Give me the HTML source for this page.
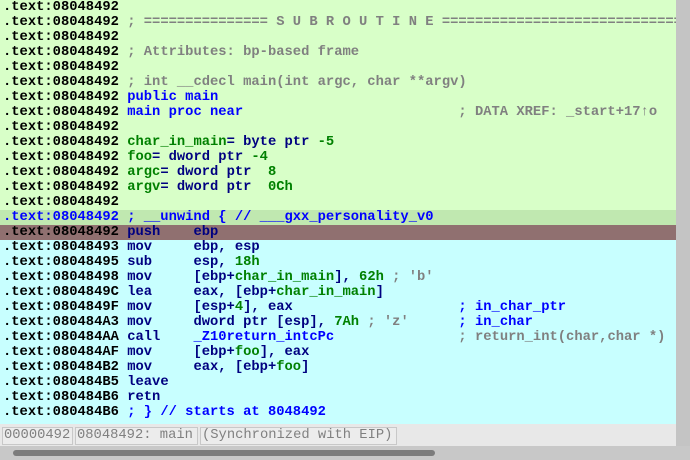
<!DOCTYPE html>
<html><head><style>
body{margin:0;width:690px;height:460px;overflow:hidden;background:#fff;position:relative;font-family:"Liberation Mono",monospace;}
#code{position:absolute;left:0;top:0;width:676px;height:424px;background:#c8ffff;overflow:hidden}
.l{height:15px;line-height:15px;white-space:pre;font-size:13.8px;font-weight:bold;color:#000;padding-left:3px}
.g{background:#d8ffc8}.h{background:#c0e8b0}.b{background:#907070}
.c{color:#808080}.k{color:#0000ff}.n{color:#000080}.v{color:#008000}
#vs{position:absolute;left:676px;top:0;width:14px;height:446px;background:#c4c4c4}
#vt{position:absolute;left:680px;top:17px;width:6px;height:27px;background:#7a7a7a;border-radius:3px}
#st{position:absolute;left:0;top:424px;width:676px;height:22px;background:#e8e8e8}
.bx{position:absolute;top:3px;height:16px;border:1px solid #c8c8c8;background:#ececec;color:#808080;font-size:13.8px;line-height:16px;white-space:pre;padding-left:1px}
#hs{position:absolute;left:0;top:446px;width:690px;height:14px;background:#c8c8c8}
#ht{position:absolute;left:13px;top:4px;width:422px;height:6px;background:#7c7c7c;border-radius:3px}
</style></head><body>
<div id="code">
<div class="l g">.text:08048492</div>
<div class="l g">.text:08048492 <span class="c">; =============== S U B R O U T I N E =======================================</span></div>
<div class="l g">.text:08048492</div>
<div class="l g">.text:08048492 <span class="c">; Attributes: bp-based frame</span></div>
<div class="l g">.text:08048492</div>
<div class="l g">.text:08048492 <span class="c">; int __cdecl main(int argc, char **argv)</span></div>
<div class="l g">.text:08048492 <span class="k">public main</span></div>
<div class="l g">.text:08048492 <span class="k">main proc near</span>                          <span class="c">; DATA XREF: _start+17↑o</span></div>
<div class="l g">.text:08048492</div>
<div class="l g">.text:08048492 <span class="v">char_in_main</span><span class="n">= byte ptr </span><span class="v">-5</span></div>
<div class="l g">.text:08048492 <span class="v">foo</span><span class="n">= dword ptr </span><span class="v">-4</span></div>
<div class="l g">.text:08048492 <span class="v">argc</span><span class="n">= dword ptr  </span><span class="v">8</span></div>
<div class="l g">.text:08048492 <span class="v">argv</span><span class="n">= dword ptr  </span><span class="v">0Ch</span></div>
<div class="l g">.text:08048492</div>
<div class="l h k">.text:08048492 ; __unwind { // ___gxx_personality_v0</div>
<div class="l b">.text:08048492 <span class="n">push    ebp</span></div>
<div class="l">.text:08048493 <span class="n">mov     ebp, esp</span></div>
<div class="l">.text:08048495 <span class="n">sub     esp, </span><span class="v">18h</span></div>
<div class="l">.text:08048498 <span class="n">mov     [ebp+</span><span class="v">char_in_main</span><span class="n">], </span><span class="v">62h</span> <span class="c">; 'b'</span></div>
<div class="l">.text:0804849C <span class="n">lea     eax, [ebp+</span><span class="v">char_in_main</span><span class="n">]</span></div>
<div class="l">.text:0804849F <span class="n">mov     [esp+</span><span class="v">4</span><span class="n">], eax</span>                    <span class="k">; in_char_ptr</span></div>
<div class="l">.text:080484A3 <span class="n">mov     dword ptr [esp], </span><span class="v">7Ah</span> <span class="c">; 'z'</span>      <span class="k">; in_char</span></div>
<div class="l">.text:080484AA <span class="n">call    </span><span class="k">_Z10return_intcPc</span>               <span class="c">; return_int(char,char *)</span></div>
<div class="l">.text:080484AF <span class="n">mov     [ebp+</span><span class="v">foo</span><span class="n">], eax</span></div>
<div class="l">.text:080484B2 <span class="n">mov     eax, [ebp+</span><span class="v">foo</span><span class="n">]</span></div>
<div class="l">.text:080484B5 <span class="n">leave</span></div>
<div class="l">.text:080484B6 <span class="n">retn</span></div>
<div class="l">.text:080484B6 <span class="k">; } // starts at 8048492</span></div>
</div>
<div id="vs"><div id="vt"></div></div>
<div id="st">
<div class="bx" style="left:2px;width:68px">00000492</div>
<div class="bx" style="left:75px;width:120px">08048492: main</div>
<div class="bx" style="left:200px;width:194px">(Synchronized with EIP)</div>
</div>
<div id="hs"><div id="ht"></div></div>
</body></html>
